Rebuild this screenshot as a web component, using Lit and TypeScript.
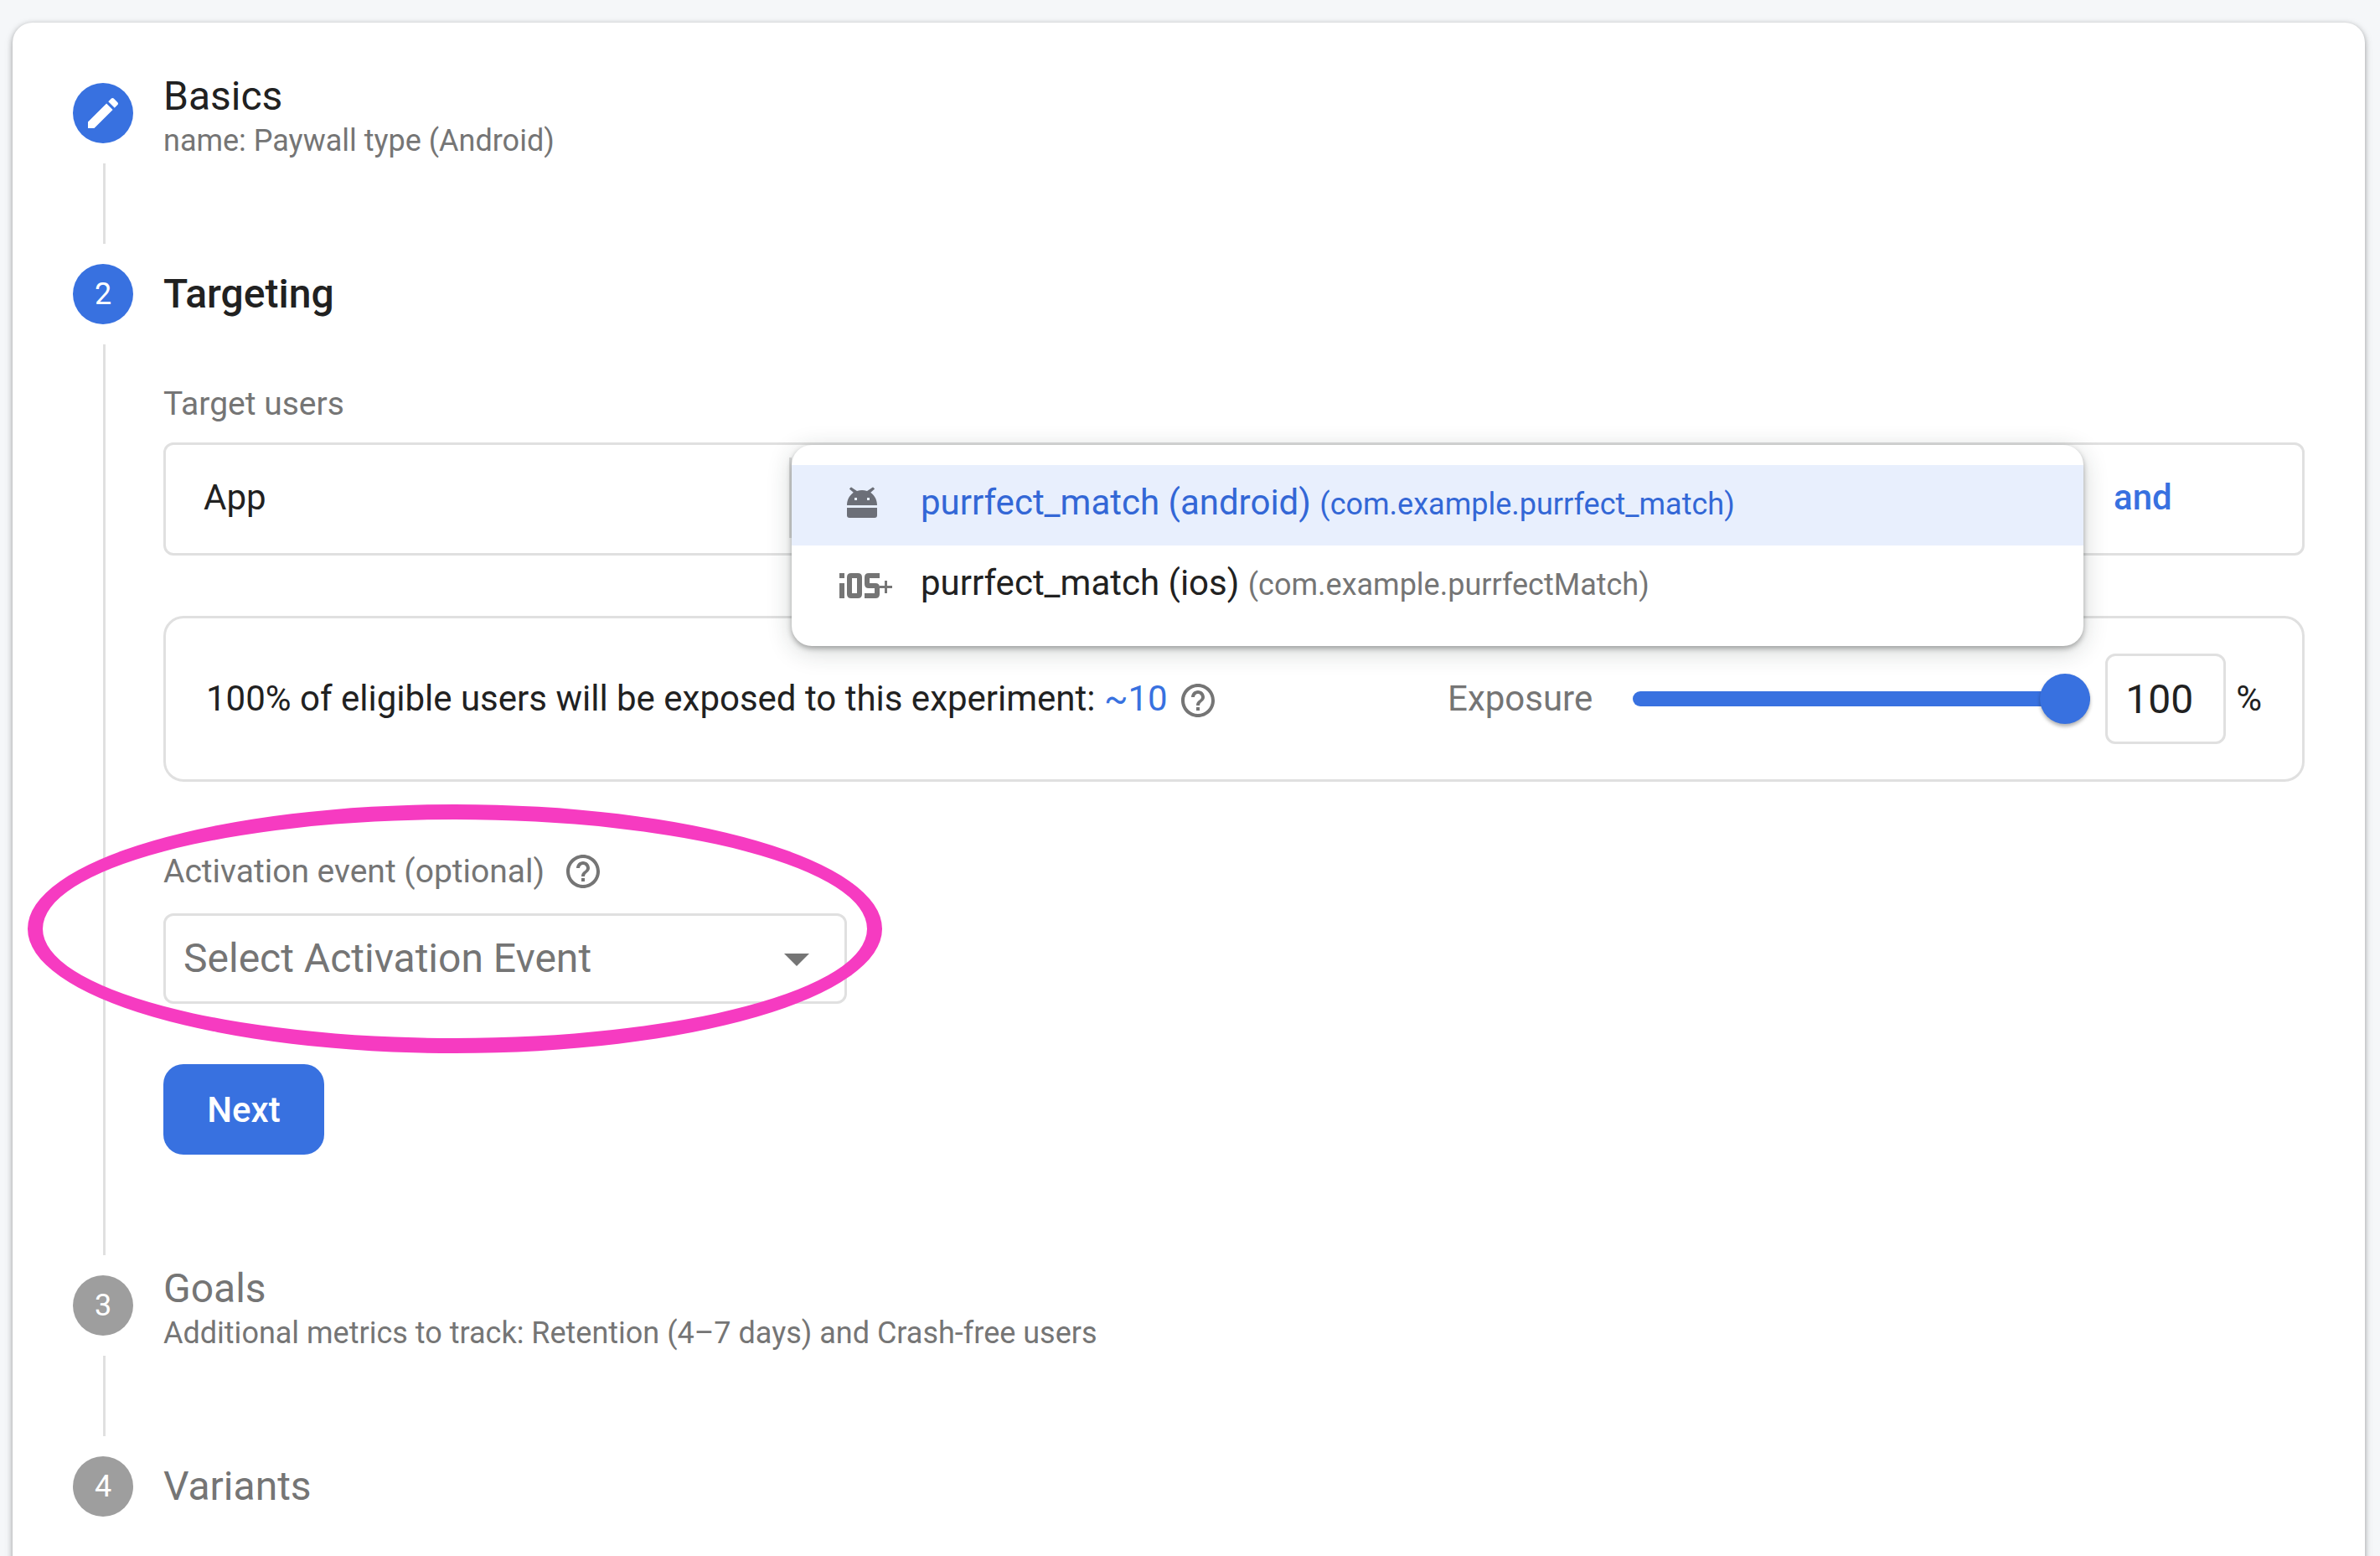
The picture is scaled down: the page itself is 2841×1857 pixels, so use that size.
import { LitElement, html, css, svg } from "lit";
import { customElement, property, state } from "lit/decorators.js";

const HELP_PATH =
  "M11 18h2v-2h-2v2zm1-16C6.48 2 2 6.48 2 12s4.48 10 10 10 10-4.48 10-10S17.52 2 12 2zm0 18c-4.41 0-8-3.59-8-8s3.59-8 8-8 8 3.59 8 8-3.59 8-8 8zm0-14c-2.21 0-4 1.79-4 4h2c0-1.1.9-2 2-2s2 .9 2 2c0 2-3 1.75-3 5h2c0-2.25 3-2.5 3-5 0-2.21-1.79-4-4-4z";

const helpIcon = html`<svg viewBox="0 0 24 24" aria-hidden="true">${svg`<path d=${HELP_PATH} />`}</svg>`;

@customElement("wizard-step")
export class WizardStep extends LitElement {
  @property() heading = "";
  @property() summary = "";
  @property() marker = "";
  @property({ reflect: true }) status: "done" | "active" | "pending" = "pending";
  @property({ type: Boolean, reflect: true }) last = false;

  static styles = css`
    :host {
      display: grid;
      grid-template-columns: 72px minmax(0, 1fr);
      column-gap: 36px;
    }
    .rail {
      display: flex;
      flex-direction: column;
      align-items: center;
      gap: 24px;
    }
    .badge {
      width: 72px;
      height: 72px;
      flex: none;
      border-radius: 50%;
      display: flex;
      align-items: center;
      justify-content: center;
      background: #3871e0;
      color: #fff;
      font-size: 36px;
      line-height: 48px;
    }
    :host([status="pending"]) .badge {
      background: #9e9e9e;
    }
    .badge svg {
      width: 48px;
      height: 48px;
      fill: #fff;
    }
    .line {
      flex: 1;
      width: 3px;
      min-height: 96px;
      margin: 0 0 24px 3px;
      background: #e0e0e0;
    }
    :host([last]) .line {
      visibility: hidden;
    }
    .head {
      box-sizing: border-box;
      height: 72px;
      display: flex;
      flex-direction: column;
      justify-content: center;
    }
    :host([summary]) .head {
      padding-top: 10px;
    }
    h2 {
      margin: 0;
      font-size: 48px;
      line-height: 56px;
      font-weight: 400;
      color: #212121;
    }
    :host([status="active"]) h2 {
      font-weight: 500;
    }
    :host([status="pending"]) h2 {
      color: #757575;
    }
    p {
      margin: 0;
      font-size: 36px;
      line-height: 50px;
      color: #757575;
    }
  `;

  render() {
    return html`
      <div class="rail">
        <div class="badge">
          ${this.status === "done"
            ? html`<svg viewBox="0 0 24 24" aria-label="Edit"><path d="M3 17.25V21h3.75L17.81 9.94l-3.75-3.75L3 17.25zM20.71 7.04c.39-.39.39-1.02 0-1.41l-2.34-2.34c-.39-.39-1.02-.39-1.41 0l-1.83 1.83 3.75 3.75 1.83-1.83z" /></svg>`
            : this.marker}
        </div>
        <div class="line"></div>
      </div>
      <div class="main">
        <div class="head">
          <h2>${this.heading}</h2>
          ${this.summary ? html`<p>${this.summary}</p>` : null}
        </div>
        <slot></slot>
      </div>
    `;
  }
}

@customElement("app-root")
export class AppRoot extends LitElement {
  @state() private exposure = 100;

  static styles = css`
    :host {
      display: block;
      box-sizing: border-box;
      height: 100vh;
      overflow: hidden;
      padding: 27px 18px 0 15px;
      background: #f5f7f9;
      color: #212121;
      font-family: Roboto, "Liberation Sans", sans-serif;
      font-size: 42px;
      line-height: 48px;
    }
    * {
      box-sizing: border-box;
    }
    .card {
      min-height: 100%;
      padding: 72px;
      border-radius: 24px 24px 0 0;
      background: #fff;
      box-shadow: 0 2px 6px rgba(0, 0, 0, 0.3), 0 3px 12px rgba(0, 0, 0, 0.12);
    }
    .body {
      padding: 71px 0 144px;
      display: flex;
      flex-direction: column;
      align-items: stretch;
    }
    .label {
      display: flex;
      align-items: center;
      gap: 22px;
      height: 48px;
      font-size: 39px;
      color: #757575;
    }
    .help {
      width: 48px;
      height: 48px;
      padding: 0;
      border: 0;
      background: none;
      flex: none;
    }
    .help svg {
      display: block;
      width: 48px;
      height: 48px;
      fill: #757575;
    }
    .target {
      position: relative;
      display: flex;
      align-items: center;
      height: 135px;
      margin-top: 22px;
      padding: 0 45px 4px;
      border: 3px solid #e0e0e0;
      border-radius: 12px;
    }
    .field {
      flex: 0 0 699px;
    }
    .divider {
      width: 3px;
      height: 96px;
      background: #e0e0e0;
    }
    .and {
      margin-left: auto;
      width: 180px;
      padding: 0;
      border: 0;
      background: none;
      font: inherit;
      font-weight: 500;
      text-align: left;
      color: #3871e0;
    }
    .menu {
      position: absolute;
      z-index: 1;
      top: 0;
      left: 747px;
      right: 261px;
      margin: 0;
      padding: 24px 0;
      list-style: none;
      border-radius: 24px;
      background: #fff;
      box-shadow: 0 3px 6px rgba(0, 0, 0, 0.3), 0 6px 30px rgba(32, 44, 40, 0.2);
    }
    .option {
      display: flex;
      align-items: center;
      height: 96px;
      padding: 0 0 4px 57px;
      gap: 25px;
    }
    .option.selected {
      background: #e8effd;
      color: #3367d6;
    }
    .option svg {
      width: 72px;
      height: 48px;
      flex: none;
      fill: #6c6f78;
    }
    .option.other svg {
      fill: #757575;
    }
    .option small {
      font-size: 36px;
      color: #757575;
    }
    .option.selected small {
      color: inherit;
    }
    .exposure {
      display: flex;
      align-items: center;
      height: 198px;
      margin-top: 72px;
      padding: 0 48px;
      border: 3px solid #e0e0e0;
      border-radius: 24px;
    }
    .eligible {
      display: flex;
      align-items: center;
      gap: 12px;
      margin-right: auto;
    }
    .eligible .help {
      height: 52px;
      padding-top: 4px;
    }
    .count {
      color: #3871e0;
    }
    .muted {
      color: #757575;
    }
    .slider {
      appearance: none;
      width: 546px;
      height: 60px;
      margin: 0 18px 0 48px;
      background: none;
    }
    .slider::-webkit-slider-runnable-track {
      height: 18px;
      border-radius: 9px;
      background: #3871e0;
    }
    .slider::-webkit-slider-thumb {
      appearance: none;
      width: 60px;
      height: 60px;
      margin-top: -21px;
      border-radius: 50%;
      background: #3871e0;
      box-shadow: 0 3px 4px rgba(0, 0, 0, 0.3);
    }
    .amount {
      width: 144px;
      height: 108px;
      padding: 0 21px;
      margin-right: 12px;
      border: 3px solid #e0e0e0;
      border-radius: 12px;
      background: #fff;
      font: inherit;
      font-size: 48px;
      color: #212121;
    }
    .activation {
      position: relative;
      align-self: flex-start;
      width: 816px;
      margin-top: 83px;
    }
    .picker {
      position: relative;
      margin-top: 26px;
    }
    .picker select {
      appearance: none;
      display: block;
      width: 100%;
      height: 108px;
      padding: 0 21px;
      border: 3px solid #e0e0e0;
      border-radius: 12px;
      background: #fff;
      font: inherit;
      font-size: 48px;
      color: #757575;
    }
    .arrow {
      position: absolute;
      top: 48px;
      right: 45px;
      width: 30px;
      height: 15px;
      fill: #757575;
      pointer-events: none;
    }
    .ring {
      position: absolute;
      z-index: 2;
      top: -56px;
      left: -162px;
      width: 1020px;
      height: 297px;
      border: 18px solid #f63bc1;
      border-radius: 50%;
      pointer-events: none;
    }
    .next {
      align-self: flex-start;
      min-width: 192px;
      height: 108px;
      margin-top: 72px;
      padding: 2px 48px 0;
      border: 0;
      border-radius: 24px;
      background: #3871e0;
      color: #fff;
      font: inherit;
      font-weight: 500;
    }
  `;

  private onExposure(e: Event) {
    const value = Number((e.target as HTMLInputElement).value);
    this.exposure = Math.min(100, Math.max(0, value || 0));
  }

  render() {
    return html`
      <main class="card">
        <wizard-step status="done" heading="Basics" summary="name: Paywall type (Android)"></wizard-step>

        <wizard-step status="active" marker="2" heading="Targeting">
          <div class="body">
            <div class="label">Target users</div>
            <div class="target">
              <span class="field">App</span>
              <span class="divider"></span>
              <button class="and" type="button">and</button>
              <ul class="menu" role="listbox" aria-label="App">
                <li class="option selected" role="option" aria-selected="true">
                  <svg viewBox="0 0 72 48" aria-hidden="true">
                    <path fill-rule="evenodd" d="M9 26C9 18.500 13 12.500 18.500 10L12 6.500L14 4.500L21 9Q27 7 33 9L40 4.500L42 6.500L35.500 10C41 12.500 45 18.500 45 26zM18 17v3h3v-3zM33 17v3h3v-3z" />
                    <path d="M12 6.500L14 4.500L20.500 10L18 12zM42 6.500L40 4.500L33.500 10L36 12z" />
                    <path d="M9 29H45V38Q45 41 42 41H12Q9 41 9 38z" />
                  </svg>
                  <span>purrfect_match (android) <small>(com.example.purrfect_match)</small></span>
                </li>
                <li class="option other" role="option" aria-selected="false">
                  <svg viewBox="0 0 72 48" aria-hidden="true">
                    <path d="M0 11h6v6H0zM0 23h6v18H0z" />
                    <path fill-rule="evenodd" d="M14 11h8q5 0 5 5v20q0 5-5 5h-8q-5 0-5-5V16q0-5 5-5zM15 17v18h6V17z" />
                    <path d="M35 11h13v6H36v6h7q5 0 5 5v8q0 5-5 5H30v-6h12v-6h-7q-5 0-5-5v-8q0-5 5-5z" />
                    <path d="M48 26h6v-6h3v6h6v3h-6v6h-3v-6h-6z" />
                  </svg>
                  <span>purrfect_match (ios) <small>(com.example.purrfectMatch)</small></span>
                </li>
              </ul>
            </div>

            <div class="exposure">
              <div class="eligible">
                <span>${this.exposure}% of eligible users will be exposed to this experiment: <span class="count">~10</span></span>
                <button class="help" type="button" aria-label="About exposure">${helpIcon}</button>
              </div>
              <label class="muted" for="exposure-range">Exposure</label>
              <input class="slider" id="exposure-range" type="range" min="0" max="100" .value=${String(this.exposure)} @input=${this.onExposure} />
              <input class="amount" id="exposure-amount" type="text" inputmode="numeric" aria-label="Exposure percent" .value=${String(this.exposure)} @change=${this.onExposure} />
              <label for="exposure-amount">%</label>
            </div>

            <div class="activation">
              <div class="label">
                <label for="activation-event">Activation event (optional)</label>
                <button class="help" type="button" aria-label="About activation events">${helpIcon}</button>
              </div>
              <div class="picker">
                <select id="activation-event">
                  <option>Select Activation Event</option>
                </select>
                <svg class="arrow" viewBox="0 0 30 15" aria-hidden="true"><path d="M0 0h30L15 15z" /></svg>
              </div>
              <div class="ring"></div>
            </div>

            <button class="next" type="button">Next</button>
          </div>
        </wizard-step>

        <wizard-step status="pending" marker="3" heading="Goals" summary="Additional metrics to track: Retention (4–7 days) and Crash-free users"></wizard-step>

        <wizard-step status="pending" marker="4" heading="Variants" last></wizard-step>
      </main>
    `;
  }
}
